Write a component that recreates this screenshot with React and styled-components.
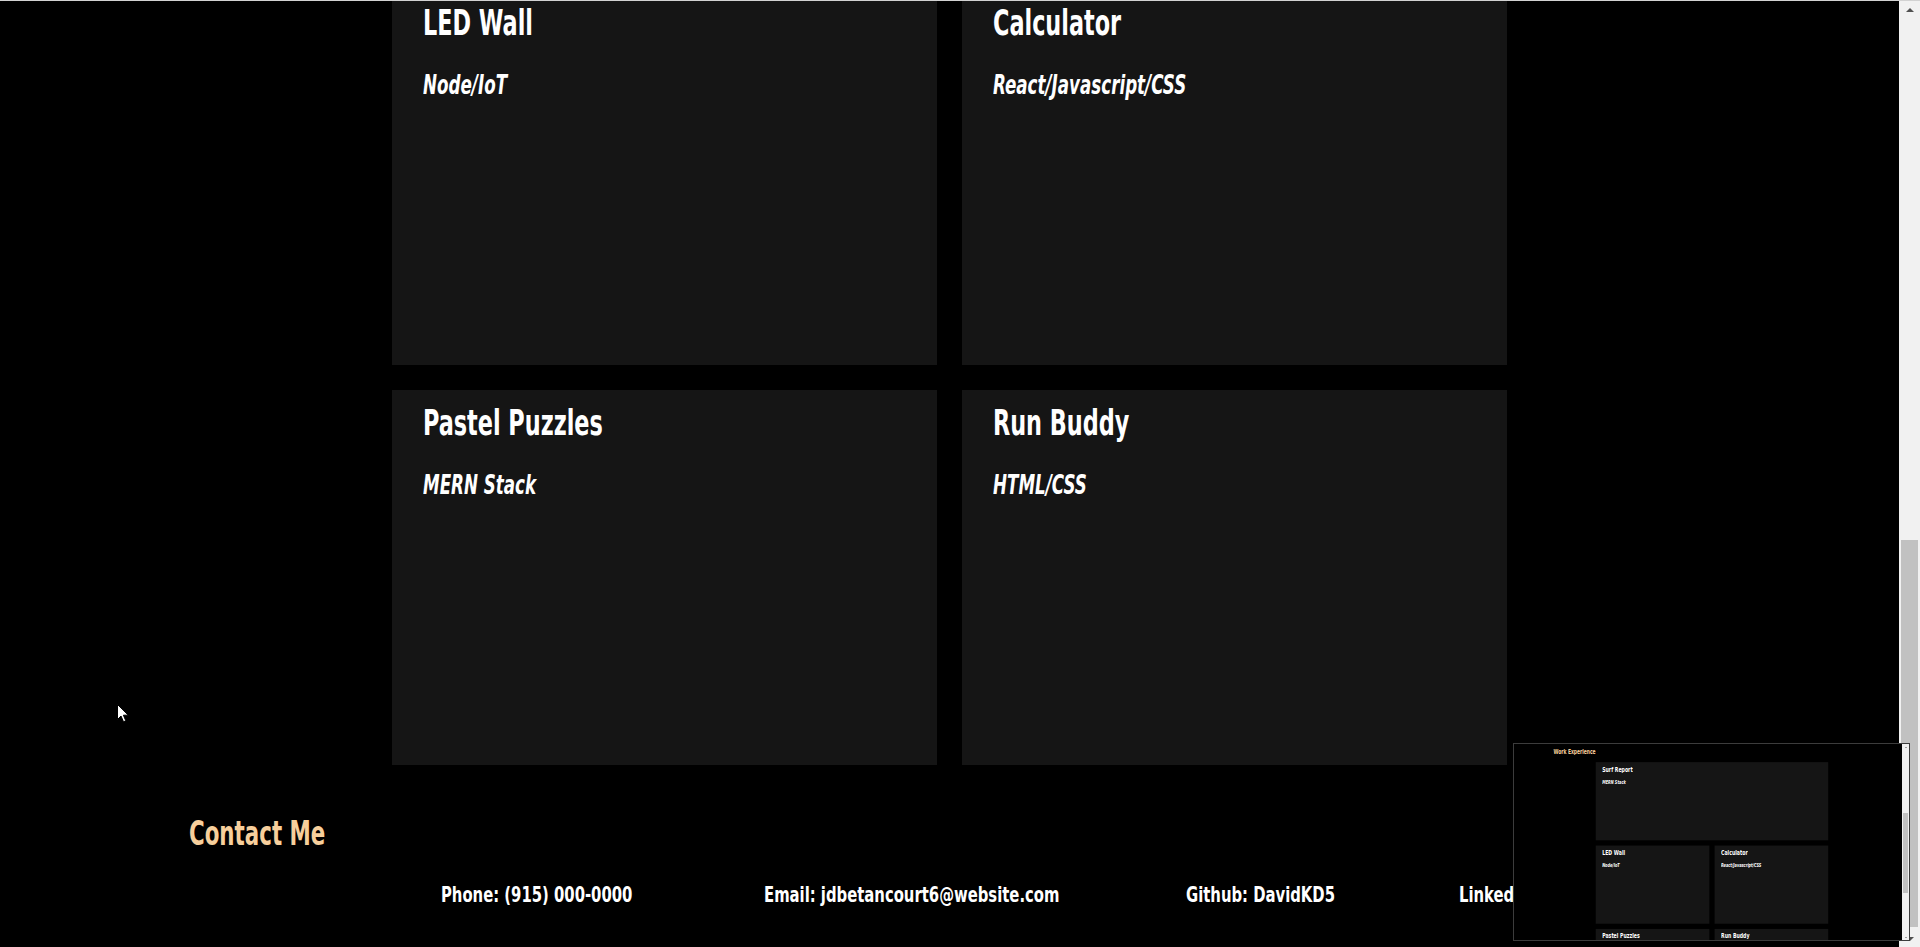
import React from "react";
import styled, { createGlobalStyle } from "styled-components";

const peach = "#f7cf9c";

const GlobalStyle = createGlobalStyle`
  html, body {
    margin: 0;
    padding: 0;
    background: #000;
    overflow: hidden;
  }
  body {
    font-family: "Liberation Sans Narrow", "DejaVu Sans Condensed", "Liberation Sans", sans-serif;
    font-weight: 700;
  }
`;

const Frame = styled.div`
  position: relative;
  display: flex;
  height: 947px;
  box-sizing: border-box;
  border-top: 1px solid #d2d2d2;
  background: #000;
`;

const Viewport = styled.div`
  flex: 1;
  min-width: 0;
  display: flex;
  flex-direction: column;
  justify-content: flex-end;
  overflow: hidden;
`;

const Page = styled.div`
  flex-shrink: 0;
  width: 100%;
  color: #fff;
`;

const Section = styled.section`
  padding: ${(p) => p.$pt || 0}px 0 ${(p) => p.$pb || 0}px;
`;

const SectionHeader = styled.div`
  display: flex;
  padding-left: 189px;
  margin-bottom: 29px;
`;

// no condensed face is installed, so squeeze a regular one
const SectionTitle = styled.h2`
  margin: 0;
  font-size: 33px;
  line-height: 1.2;
  font-weight: 700;
  color: ${peach};
  white-space: nowrap;
  transform: scaleX(0.72);
  transform-origin: 0 0;
`;

const ProjectGrid = styled.div`
  display: grid;
  grid-template-columns: 1fr 1fr;
  grid-auto-rows: 375px;
  gap: 25px;
  width: 1115px;
  margin: 0 auto;
`;

const ProjectCard = styled.article`
  grid-column: ${(p) => (p.$wide ? "span 2" : "auto")};
  display: flex;
  flex-direction: column;
  align-items: flex-start;
  box-sizing: border-box;
  padding: 11px 31px;
  background: #151515;
`;

const ProjectTitle = styled.h3`
  margin: 0;
  font-size: 36px;
  line-height: 1.2;
  font-weight: 700;
  white-space: nowrap;
  transform: scaleX(0.69);
  transform-origin: 0 0;
`;

const ProjectStack = styled.h4`
  margin: 26px 0 0;
  font-size: 26px;
  line-height: 1.2;
  font-weight: 700;
  font-style: italic;
  white-space: nowrap;
  transform: scaleX(0.715);
  transform-origin: 0 0;
`;

const ContactList = styled.ul`
  display: grid;
  grid-template-columns: 323px 422px 273px max-content;
  margin: 0;
  padding: 0 0 0 441px;
  list-style: none;
`;

const ContactItem = styled.li`
  font-size: 21px;
  line-height: 1.2;
  white-space: nowrap;
  transform: scaleX(0.785);
  transform-origin: 0 0;
`;

const Scrollbar = styled.div`
  flex-shrink: 0;
  width: ${(p) => p.$width}px;
  display: flex;
  flex-direction: column;
  background: #f1f1f1;
`;

const ScrollArrow = styled.div`
  height: ${(p) => p.$size}px;
  display: flex;
  align-items: center;
  justify-content: center;

  &::before {
    content: "";
    border-left: ${(p) => p.$tip}px solid transparent;
    border-right: ${(p) => p.$tip}px solid transparent;
    border-bottom: ${(p) => p.$tip}px solid #505050;
    transform: ${(p) => (p.$down ? "rotate(180deg)" : "none")};
  }
`;

const ScrollTrack = styled.div`
  flex: 1;
  display: flex;
  flex-direction: column;
  justify-content: ${(p) => (p.$end ? "flex-end" : "flex-start")};
`;

const ScrollThumb = styled.div`
  height: ${(p) => p.$height}px;
  margin: ${(p) => p.$margin};
  background: #c1c1c1;
`;

const Preview = styled.div`
  position: absolute;
  right: 10px;
  bottom: 6px;
  width: 397px;
  height: 198px;
  box-sizing: border-box;
  display: flex;
  border: 1px solid #3c3c3c;
  background: #000;
  overflow: hidden;
`;

const PreviewViewport = styled.div`
  flex: 1;
  min-width: 0;
  overflow: hidden;
`;

const MiniPage = styled.div`
  width: 1899px;
  transform: scale(0.2085);
  transform-origin: 0 0;
`;

const Cursor = styled.svg`
  position: absolute;
  left: 117px;
  top: 703px;
`;

const projects = [
  { title: "Surf Report", stack: "MERN Stack", wide: true },
  { title: "LED Wall", stack: "Node/IoT" },
  { title: "Calculator", stack: "React/Javascript/CSS" },
  { title: "Pastel Puzzles", stack: "MERN Stack" },
  { title: "Run Buddy", stack: "HTML/CSS" }
];

const contacts = [
  "Phone: (915) 000-0000",
  "Email: jdbetancourt6@website.com",
  "Github: DavidKD5",
  "LinkedIn: David Betancourt"
];

const Portfolio = () => (
  <Page>
    <Section $pt={18} $pb={49}>
      <SectionHeader>
        <SectionTitle>Work Experience</SectionTitle>
      </SectionHeader>
      <ProjectGrid>
        {projects.map((p) => (
          <ProjectCard key={p.title} $wide={p.wide}>
            <ProjectTitle>{p.title}</ProjectTitle>
            <ProjectStack>{p.stack}</ProjectStack>
          </ProjectCard>
        ))}
      </ProjectGrid>
    </Section>
    <Section $pb={39}>
      <SectionHeader>
        <SectionTitle>Contact Me</SectionTitle>
      </SectionHeader>
      <ContactList>
        {contacts.map((c) => (
          <ContactItem key={c}>{c}</ContactItem>
        ))}
      </ContactList>
    </Section>
  </Page>
);

export default function App() {
  return (
    <>
      <GlobalStyle />
      <Frame>
        <Viewport>
          <Portfolio />
        </Viewport>
        <Scrollbar $width={21}>
          <ScrollArrow $size={17} $tip={4} />
          <ScrollTrack $end>
            <ScrollThumb $height={387} $margin="0 2px 3px" />
          </ScrollTrack>
          <ScrollArrow $size={17} $tip={4} $down />
        </Scrollbar>

        <Cursor width="13" height="20" viewBox="0 0 13 20">
          <path
            d="M0.5 0.5 L0.5 15.5 L4 12 L6.5 17.8 L8.8 16.8 L6.4 11.2 L11.3 11.2 Z"
            fill="#fff"
            stroke="#000"
            strokeWidth="1"
          />
        </Cursor>

        <Preview>
          <PreviewViewport>
            <MiniPage>
              <Portfolio />
            </MiniPage>
          </PreviewViewport>
          <Scrollbar $width={7}>
            <ScrollArrow $size={6} $tip={1.5} />
            <ScrollTrack>
              <ScrollThumb $height={80} $margin="63px 1px 0" />
            </ScrollTrack>
            <ScrollArrow $size={6} $tip={1.5} $down />
          </Scrollbar>
        </Preview>
      </Frame>
    </>
  );
}
